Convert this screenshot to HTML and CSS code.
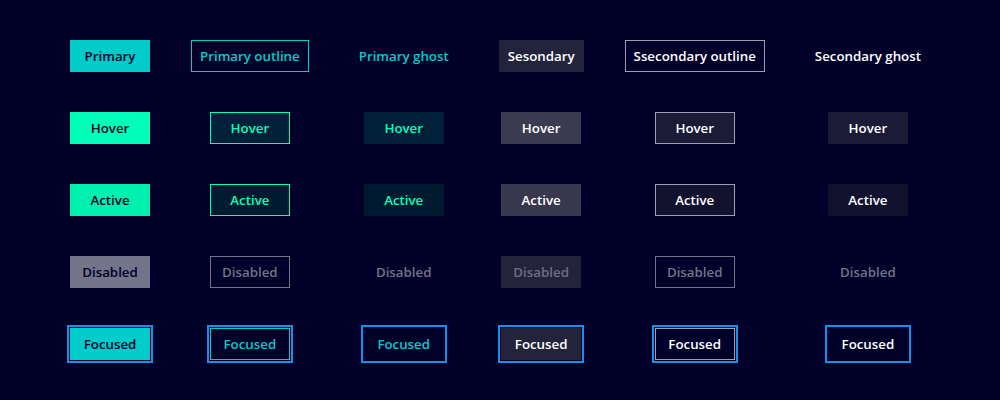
FILE: index.html
```html
<!DOCTYPE html>
<html lang="en">
<head>
<meta charset="utf-8">
<title>Buttons</title>
<link rel="stylesheet" href="styles.css">
</head>
<body>
<main class="grid">
  <button class="btn primary">Primary</button>
  <button class="btn primary-outline">Primary outline</button>
  <button class="btn primary-ghost">Primary ghost</button>
  <button class="btn secondary">Sesondary</button>
  <button class="btn secondary-outline">Ssecondary outline</button>
  <button class="btn secondary-ghost">Secondary ghost</button>

  <button class="btn primary hover">Hover</button>
  <button class="btn primary-outline hover">Hover</button>
  <button class="btn primary-ghost hover">Hover</button>
  <button class="btn secondary hover">Hover</button>
  <button class="btn secondary-outline hover">Hover</button>
  <button class="btn secondary-ghost hover">Hover</button>

  <button class="btn primary active">Active</button>
  <button class="btn primary-outline active">Active</button>
  <button class="btn primary-ghost active">Active</button>
  <button class="btn secondary active">Active</button>
  <button class="btn secondary-outline active">Active</button>
  <button class="btn secondary-ghost active">Active</button>

  <button class="btn primary disabled">Disabled</button>
  <button class="btn primary-outline disabled">Disabled</button>
  <button class="btn primary-ghost disabled">Disabled</button>
  <button class="btn secondary disabled">Disabled</button>
  <button class="btn secondary-outline disabled">Disabled</button>
  <button class="btn secondary-ghost disabled">Disabled</button>

  <button class="btn primary focused">Focused</button>
  <button class="btn primary-outline focused">Focused</button>
  <button class="btn primary-ghost focused">Focused</button>
  <button class="btn secondary focused">Focused</button>
  <button class="btn secondary-outline focused">Focused</button>
  <button class="btn secondary-ghost focused">Focused</button>
</main>
</body>
</html>
```

FILE: styles.css
```css
html, body {
  margin: 0;
  padding: 0;
  background: #000028;
  height: 100%;
}

.grid {
  display: grid;
  grid-template-columns: repeat(6, auto);
  grid-auto-rows: 32px;
  justify-content: center;
  justify-items: center;
  column-gap: 41px;
  row-gap: 40px;
  padding-top: 40px;
}

.btn {
  box-sizing: border-box;
  display: inline-flex;
  align-items: center;
  justify-content: center;
  height: 32px;
  min-width: 80px;
  padding: 1px 8px 0;
  border: 1px solid transparent;
  border-radius: 0;
  background: transparent;
  font-family: "Open Sans", "Noto Sans", sans-serif;
  font-weight: 600;
  font-size: 13.3px;
  line-height: 1;
  white-space: nowrap;
  cursor: pointer;
}

/* Primary */
.primary { background: #00cccc; border-color: #00cccc; color: #000028; }
.primary.hover { background: #00ffb9; border-color: #00ffb9; }
.primary.active { background: #00f0b0; border-color: #00f0b0; }
.primary.disabled { background: #737389; border-color: #737389; color: #000028; }

/* Primary outline */
.primary-outline { border-color: #00cccc; color: #00cccc; }
.primary-outline.hover { background: #00203a; border-color: #00ffb9; color: #00ffb9; }
.primary-outline.active { background: #001a30; border-color: #00ffb9; color: #00ffb9; }
.primary-outline.disabled { border-color: #737389; color: #737389; }

/* Primary ghost */
.primary-ghost { color: #00cccc; }
.primary-ghost.hover { background: #00203a; color: #00ffb9; }
.primary-ghost.active { background: #001a30; color: #00ffb9; }
.primary-ghost.disabled { color: #737389; }

/* Secondary */
.secondary { background: #23233c; border-color: #23233c; color: #ffffff; }
.secondary.hover { background: #3c3c51; border-color: #3c3c51; }
.secondary.active { background: #37374d; border-color: #37374d; }
.secondary.disabled { color: #6e6e85; }

/* Secondary outline */
.secondary-outline { border-color: #9d9daf; color: #ffffff; }
.secondary-outline.hover { background: #1b1b38; }
.secondary-outline.active { background: #12122f; }
.secondary-outline.disabled { border-color: #737389; color: #737389; }

/* Secondary ghost */
.secondary-ghost { color: #ffffff; }
.secondary-ghost.hover { background: #1b1b38; }
.secondary-ghost.active { background: #12122f; }
.secondary-ghost.disabled { color: #737389; }

.focused {
  outline: 2px solid #1491eb;
  outline-offset: 1px;
}
```
